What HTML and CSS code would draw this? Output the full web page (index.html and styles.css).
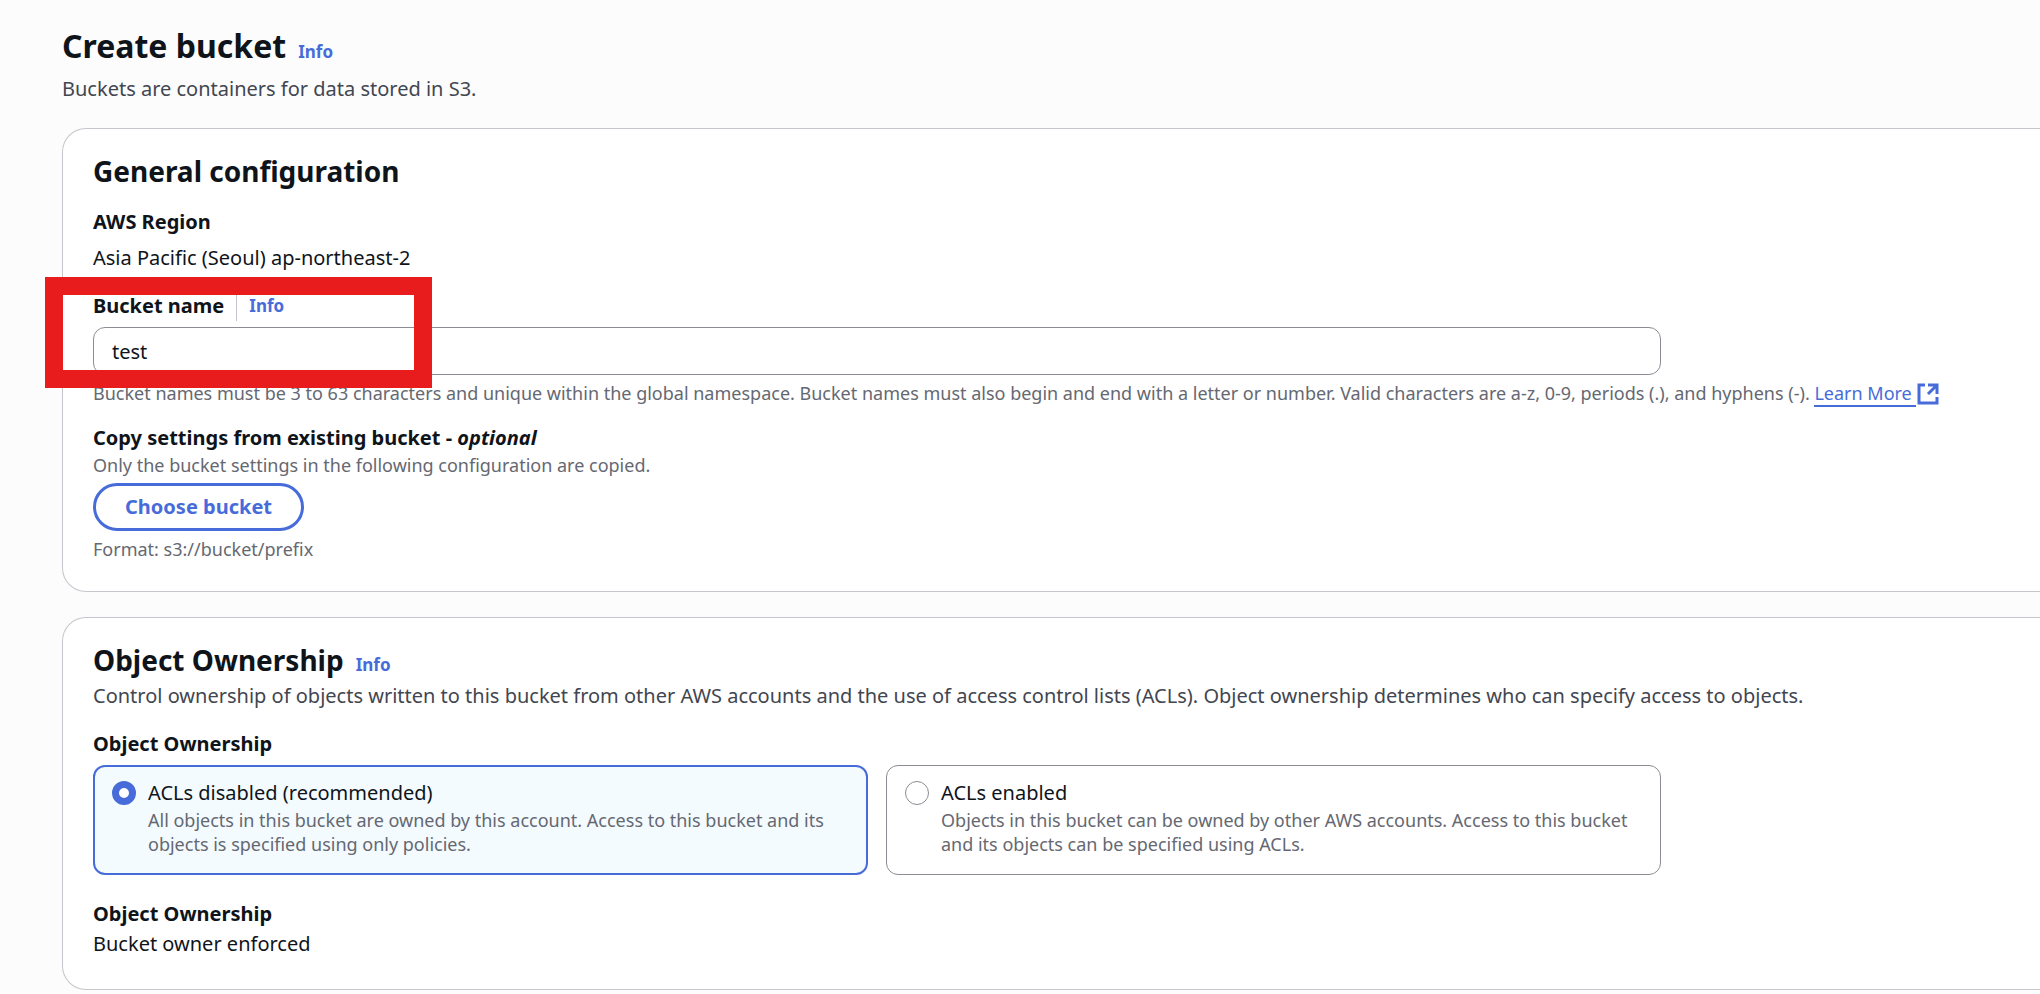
FILE: index.html
```html
<!DOCTYPE html>
<html lang="en">
<head>
    <meta charset="UTF-8">
    <meta name="viewport" content="width=device-width, initial-scale=1.0">
    <title>Create bucket</title>
    <link rel="stylesheet" href="styles.css">
</head>
<body>
    <main class="page">
        <header class="page-header">
            <div class="title-row">
                <h1>Create bucket</h1>
                <a class="info" href="#">Info</a>
            </div>
            <p class="description">Buckets are containers for data stored in S3.</p>
        </header>

        <section class="card">
            <h2>General configuration</h2>
            <div class="field region">
                <div class="label">AWS Region</div>
                <div>Asia Pacific (Seoul) ap-northeast-2</div>
            </div>
            <div class="field bucket-name">
                <div class="label-row">
                    <label class="label" for="bucketName">Bucket name</label>
                    <a class="info divided" href="#">Info</a>
                </div>
                <input class="text-input" type="text" id="bucketName" value="test">
                <p class="hint">Bucket names must be 3 to 63 characters and unique within the global namespace. Bucket names must also begin and end with a letter or number. Valid characters are a-z, 0-9, periods (.), and hyphens (-). <a class="learn-more" href="#"><span class="learn-text">Learn More </span><svg class="external" viewBox="0 0 22 22" aria-hidden="true"><path d="M8 2H2v18h18v-6M11 2h9v9M20 2l-9 9"/></svg></a></p>
                <div class="highlight"></div>
            </div>
            <div class="field copy-settings">
                <div class="label">Copy settings from existing bucket - <i>optional</i></div>
                <p class="hint">Only the bucket settings in the following configuration are copied.</p>
                <button class="button" type="button">Choose bucket</button>
                <p class="hint">Format: s3://bucket/prefix</p>
            </div>
        </section>

        <section class="card">
            <div class="title-row">
                <h2>Object Ownership</h2>
                <a class="info" href="#">Info</a>
            </div>
            <p class="description">Control ownership of objects written to this bucket from other AWS accounts and the use of access control lists (ACLs). Object ownership determines who can specify access to objects.</p>
            <div class="field ownership" role="radiogroup" aria-labelledby="ownershipLabel">
                <div class="label" id="ownershipLabel">Object Ownership</div>
                <div class="tiles">
                    <label class="tile selected" for="aclDisabled">
                        <input class="radio" type="radio" name="acl" id="aclDisabled" checked>
                        <span class="tile-text">
                            <span>ACLs disabled (recommended)</span>
                            <span class="hint">All objects in this bucket are owned by this account. Access to this bucket and its objects is specified using only policies.</span>
                        </span>
                    </label>
                    <label class="tile" for="aclEnabled">
                        <input class="radio" type="radio" name="acl" id="aclEnabled">
                        <span class="tile-text">
                            <span>ACLs enabled</span>
                            <span class="hint">Objects in this bucket can be owned by other AWS accounts. Access to this bucket and its objects can be specified using ACLs.</span>
                        </span>
                    </label>
                </div>
            </div>
            <div class="field result">
                <div class="label">Object Ownership</div>
                <div>Bucket owner enforced</div>
            </div>
        </section>
    </main>
</body>
</html>
```

FILE: styles.css
```css
* {
    box-sizing: border-box;
}
body {
    margin: 0;
    background-color: #fcfcfd;
    color: #0f141a;
    font-family: "Noto Sans", sans-serif;
    font-size: 20px;
    line-height: 30px;
}
h1, h2, p {
    margin: 0;
}
h1 {
    font-size: 32px;
    line-height: 42px;
}
h2 {
    font-size: 28px;
    line-height: 36px;
}
a {
    color: #476cda;
    text-decoration: none;
}

.page {
    padding: 25px 0 4px 62px;
}
.page-header {
    margin-bottom: 24px;
}
.page-header .description {
    margin-top: 7px;
}
.title-row {
    display: flex;
    align-items: baseline;
    gap: 12px;
}
.description {
    color: #424650;
}
.info {
    font-size: 17px;
    font-weight: bold;
    line-height: 24px;
}

/* cards run off the right side of the window */
.card {
    padding: 24px 0 30px 30px;
    margin-bottom: 25px;
    background-color: #fff;
    border: 1px solid #c6c6cd;
    border-right: none;
    border-radius: 24px 0 0 24px;
}
.card:last-child {
    margin-bottom: 0;
}
.card .description {
    margin-top: 3px;
}

.field {
    margin-top: 18px;
}
.label {
    font-weight: bold;
}
.hint {
    color: #656871;
    font-size: 18px;
    line-height: 24px;
}
.region {
    display: grid;
    gap: 6px;
}
.bucket-name {
    position: relative;
}
.label-row {
    display: flex;
    align-items: center;
    margin-bottom: 6px;
}
.divided {
    margin-left: 12px;
    padding-left: 12px;
    border-left: 1px solid #c6c6cd;
    line-height: 30px;
}
.text-input {
    display: block;
    width: calc(100% - 379px);
    height: 48px;
    padding: 0 18px;
    margin-bottom: 6px;
    border: 1px solid #8c8c94;
    border-radius: 12px;
    background-color: #fff;
    color: #0f141a;
    font: inherit;
}
.learn-text {
    display: inline-block;
    white-space: pre;
    margin-bottom: -2px;
    border-bottom: 2px solid #476cda;
}
.external {
    width: 22px;
    height: 22px;
    margin-left: 1px;
    vertical-align: -5px;
    fill: none;
    stroke: #476cda;
    stroke-width: 3;
}
.highlight {
    position: absolute;
    top: -14px;
    left: -48px;
    width: 387px;
    height: 111px;
    border: 18px solid #e81c1c;
    pointer-events: none;
}
.button {
    display: block;
    height: 48px;
    padding: 0 29px;
    margin: 6px 0;
    border: 3px solid #476cda;
    border-radius: 24px;
    background-color: #fff;
    color: #476cda;
    font: inherit;
    font-weight: bold;
}

.tiles {
    display: grid;
    grid-template-columns: 1fr 1fr;
    gap: 18px;
    width: calc(100% - 379px);
    margin-top: 6px;
}
.tile {
    display: flex;
    gap: 12px;
    padding: 12px 18px 18px;
    border: 1px solid #8c8c94;
    border-radius: 12px;
}
.tile.selected {
    padding: 11px 17px 17px;
    border: 2px solid #476cda;
    background-color: #f3fbff;
}
.tile-text {
    display: grid;
}
.radio {
    appearance: none;
    flex: none;
    width: 24px;
    height: 24px;
    margin: 3px 0;
    border: 1px solid #8c8c94;
    border-radius: 50%;
    background-color: #fff;
}
.radio:checked {
    border: 7px solid #476cda;
}
.result {
    margin-top: 24px;
}
```
